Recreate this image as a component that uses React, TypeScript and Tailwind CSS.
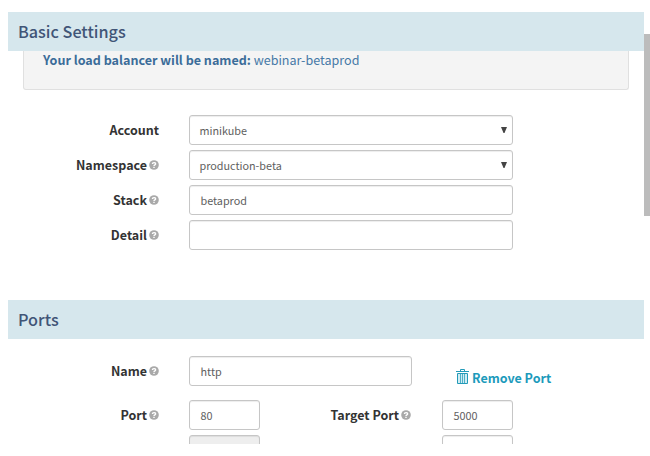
import type { ReactNode } from "react";

function Help() {
  return (
    <svg viewBox="0 0 10 10" className="ml-[2px] h-[10px] w-[10px] shrink-0">
      <circle cx="5" cy="5" r="4.8" fill="#a9a9a9" />
      <path d="M3.4 4C3.4 2.2 6.6 2.2 6.6 3.9C6.6 4.9 5 4.8 5 6M5 6.8V8.1" fill="none" stroke="#fff" strokeWidth="1.4" />
    </svg>
  );
}

function Label({ children, help = true, width = "w-[151px]" }: { children: ReactNode; help?: boolean; width?: string }) {
  return (
    <div className={`flex ${width} shrink-0 items-center justify-end text-[12.5px] font-bold whitespace-nowrap text-[#333]`}>
      <span>{children}</span>
      {help && <Help />}
    </div>
  );
}

function Box({ children, width = "w-[324px]", select = false }: { children?: ReactNode; width?: string; select?: boolean }) {
  return (
    <div className={`flex h-[30px] ${width} shrink-0 items-center justify-between rounded-[3px] border border-[#c6c6c6] bg-white ${select ? "pl-[9.5px]" : "pl-[10.5px]"} pr-[5px] text-[10.8px] text-[#606060] shadow-[inset_0_1px_1px_rgba(0,0,0,0.075)]`}>
      <span>{children}</span>
      {select && (
        <svg viewBox="0 0 6 6" className="mb-px h-[6px] w-[6px]">
          <path d="M0 0H6L3.5 6H2.5Z" fill="#444" />
        </svg>
      )}
    </div>
  );
}

function Heading({ children }: { children: ReactNode }) {
  return (
    <h2 className="flex h-[39px] shrink-0 items-center bg-[#d6e7ed] pl-[10px] text-[16.2px] font-medium text-[#415577]">
      <span className="mb-px">{children}</span>
    </h2>
  );
}

function Trash() {
  return (
    <svg viewBox="0 0 13 15" className="mr-[3px] mb-[2px] h-[15px] w-[13px]" fill="none" stroke="#239bb9">
      <path d="M2 5H11V14H2Z" fill="#d1edf3" stroke="none" />
      <path d="M0 2.5H13M4.5 2V.5H8.5V2M1.5 4.5H11.5V14.5H1.5Z" />
      <path d="M4.5 5V14M6.5 5V14M8.5 5V14" strokeOpacity=".75" />
    </svg>
  );
}

export default function App() {
  return (
    <div className="flex h-[456px] w-[650px] overflow-hidden bg-white pl-2 font-['Noto_Sans_CJK_SC',sans-serif] leading-none">
      <main className="mt-3 flex h-[432px] w-[636px] shrink-0 flex-col overflow-hidden">
        <Heading>Basic Settings</Heading>
        <div className="mx-[15px] h-[39px] shrink-0 rounded-b-[3px] border border-t-0 border-[#e0e0e0] bg-[#f4f4f4] pt-[3px] pl-[19px] text-[12.55px] text-[#4779a7]">
          <b className="text-[#3b6c99]">Your load balancer will be named:</b> webinar-betaprod
        </div>
        <div className="mt-[25px] flex flex-col gap-[5px]">
          <div className="flex gap-[30px]"><Label help={false}>Account</Label><Box select>minikube</Box></div>
          <div className="flex gap-[30px]"><Label>Namespace</Label><Box select>production-beta</Box></div>
          <div className="flex gap-[30px]"><Label>Stack</Label><Box>betaprod</Box></div>
          <div className="flex gap-[30px]"><Label>Detail</Label><Box /></div>
        </div>
        <div className="mt-[50px]"><Heading>Ports</Heading></div>
        <div className="mt-[17px] flex">
          <Label>Name</Label>
          <div className="ml-[30px]"><Box width="w-[223px]">http</Box></div>
          <div className="mt-[13px] ml-[44px] flex h-[16px] items-center text-[12.5px] font-bold text-[#1c9abb]">
            <Trash />
            <span className="mt-[3px]">Remove Port</span>
          </div>
        </div>
        <div className="mt-[14px] flex">
          <Label>Port</Label>
          <div className="ml-[30px]"><Box width="w-[71px]">80</Box></div>
          <Label width="w-[151px]">Target Port</Label>
          <div className="ml-[31px]"><Box width="w-[71px]">5000</Box></div>
        </div>
        <div className="mt-[5px] flex gap-[182px] pl-[181px]">
          <div className="h-[30px] w-[71px] rounded-[3px] border border-[#c6c6c6] bg-[#eee] shadow-[inset_0_1px_1px_rgba(0,0,0,0.075)]" />
          <div className="h-[30px] w-[71px] rounded-[3px] border border-[#c6c6c6] shadow-[inset_0_1px_1px_rgba(0,0,0,0.075)]" />
        </div>
      </main>
      <div className="mt-[34px] h-[182px] w-[6px] shrink-0 bg-[#bcbcbc]" />
    </div>
  );
}
